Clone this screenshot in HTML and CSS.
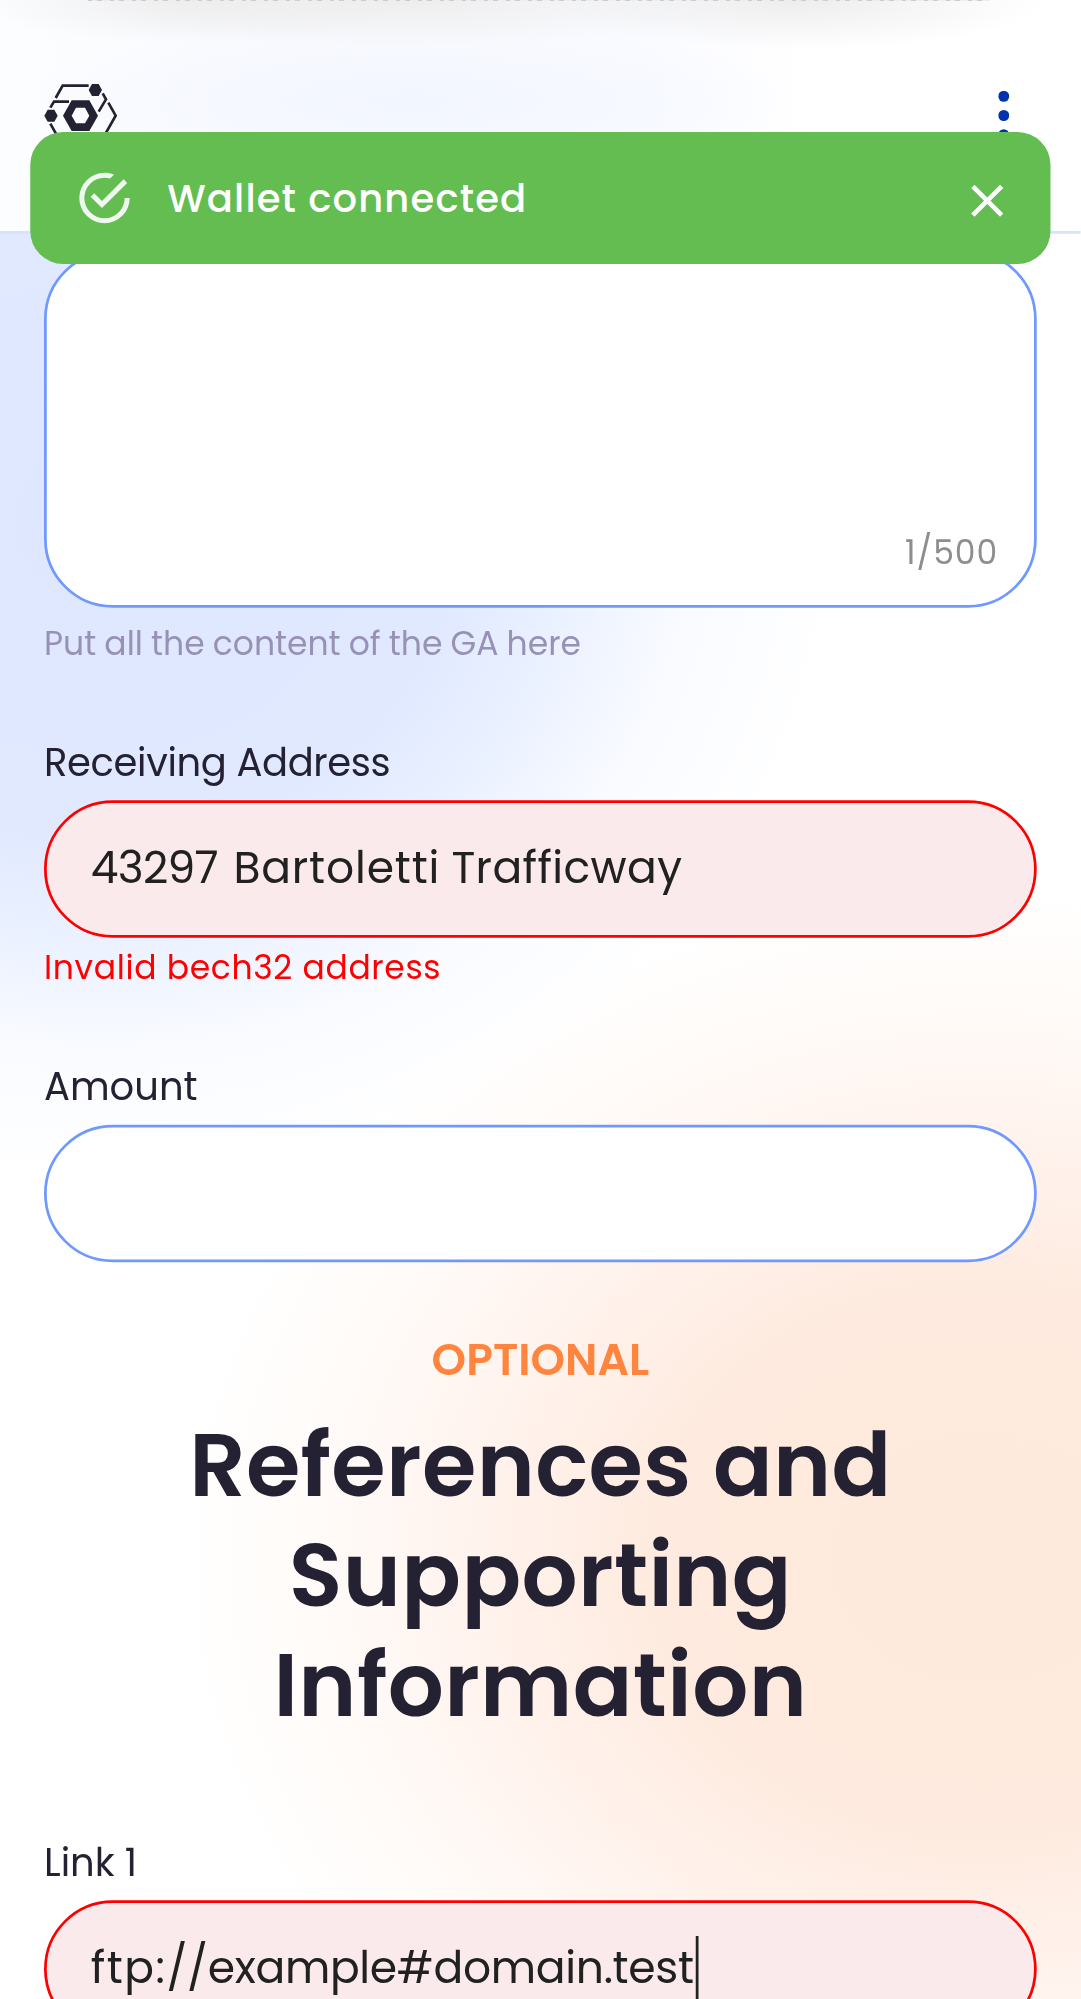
FILE: index.html
```html
<!DOCTYPE html>
<html lang="en">
<head>
<meta charset="utf-8">
<title>Governance action</title>
<link rel="stylesheet" href="styles.css">
</head>
<body>
<div class="page">
  <header class="topbar">
    <svg class="logo" viewBox="132 247.5 222.75 198" fill="#242232" stroke="none">
      <g fill="none" stroke="#242232" stroke-width="8">
        <path d="M266 257H188L167 294"/>
        <path d="M207 305H162L151 323"/>
        <path d="M308 280L318 298L296 335"/>
        <path d="M325 308L347 347L296 437H188L151 371"/>
      </g>
      <path d="M276 252H296L306 270L296 288H276L266 270Z"/>
      <path d="M143 329H163L173 347L163 365H143L133 347Z"/>
      <path fill-rule="evenodd" d="M215 301H268L294 347L268 393H215L189 347ZM228 323L215 347L228 370H255L268 347L255 323Z"/>
    </svg>
    <svg class="menu-dots" viewBox="0 0 4 18" fill="#0033AD">
      <circle cx="2" cy="2" r="2"/><circle cx="2" cy="9" r="2"/><circle cx="2" cy="16" r="2"/>
    </svg>
  </header>

  <div class="toast" role="alert">
    <svg class="toast-icon" viewBox="0 0 24 24" fill="#fff"><path d="M20,12A8,8 0 0,1 12,20A8,8 0 0,1 4,12A8,8 0 0,1 12,4C12.76,4 13.5,4.11 14.2,4.31L15.77,2.74C14.61,2.26 13.34,2 12,2A10,10 0 0,0 2,12A10,10 0 0,0 12,22A10,10 0 0,0 22,12M7.91,10.08L6.5,11.5L11,16L21,6L19.59,4.58L11,13.17L7.91,10.08Z"/></svg>
    <span class="toast-text">Wallet connected</span>
    <svg class="toast-close" viewBox="0 0 24 24" fill="#fff"><path d="M19 6.41L17.59 5 12 10.59 6.41 5 5 6.41 10.59 12 5 17.59 6.41 19 12 13.41 17.59 19 19 17.59 13.41 12z"/></svg>
  </div>

  <main class="form">
    <div class="field">
      <div class="control control-area"><span class="counter">1/500</span></div>
      <p class="helper">Put all the content of the GA here</p>
    </div>
    <div class="field">
      <span class="label label-address">Receiving Address</span>
      <div class="control invalid"><span class="house">43297 </span><span class="street">Bartoletti </span><span class="street-type">Trafficway</span></div>
      <p class="helper error">Invalid bech32 address</p>
    </div>
    <div class="field">
      <span class="label">Amount</span>
      <div class="control"></div>
    </div>
    <section class="section-title">
      <p class="optional">OPTIONAL</p>
      <h2 class="title">References and Supporting Information</h2>
    </section>
    <div class="field">
      <span class="label">Link 1</span>
      <div class="control invalid"><span class="scheme">ftp:</span><span class="rest">//example#domain.test</span><i class="caret"></i></div>
    </div>
  </main>
</div>
</body>
</html>
```
FILE: styles.css
```css
* { box-sizing: border-box; }

body {
  margin: 0;
  height: 1999px;
  overflow: hidden;
  background:
    radial-gradient(ellipse 740px 660px at 100px 520px, #dfe7ff 0%, #e1e9ff 48%, #e9f0ff 62%, rgba(248, 250, 255, .85) 80%, rgba(255, 255, 255, 0) 100%),
    radial-gradient(ellipse 800px 670px at 980px 1560px, #feeadd 0%, #feeade 38%, #fff1ea 58%, #fffaf7 80%, rgba(255, 255, 255, 0) 100%),
    #fff;
  font-family: Poppins, Inter, sans-serif;
  color: #242232;
}

/* Phone-sized layout (393px wide) enlarged to the device scale */
.page {
  position: relative;
  width: 393px;
  height: 727px;
  overflow: hidden;
  transform: scale(2.75);
  transform-origin: 0 0;
}

.topbar {
  display: flex;
  justify-content: space-between;
  align-items: flex-start;
  height: 85px;
  padding: 30px 26px 0 16px;
  border-bottom: 1px solid #d6e2ff;
  background:
    repeating-linear-gradient(90deg, #cbcbcb 0 1.6px, #ededed 1.6px 3.4px, #cbcbcb 3.4px 5px, #ededed 5px 8px) 32px 0 / 328px .36px no-repeat,
    radial-gradient(ellipse 80px 16px at 70px 0, rgba(235, 235, 235, .8), rgba(245, 245, 245, 0)),
    radial-gradient(ellipse 120px 17px at 150px 0, rgba(236, 236, 236, .9), rgba(245, 245, 245, 0)),
    radial-gradient(ellipse 90px 18px at 290px 0, rgba(235, 235, 235, .9), rgba(245, 245, 245, 0)),
    radial-gradient(ellipse 140px 30px at 150px 37px, #f2f6ff 0%, #f5f8ff 45%, rgba(250, 251, 255, 0) 100%),
    linear-gradient(90deg, #fcfdff, #f9fafe 30%, #fafbff 60%, #fff 75%);
}

.logo { width: 27px; height: 24px; }

.menu-dots {
  width: 4px;
  height: 18px;
  margin-top: 3px;
}

/* Snackbar floating over the header and the form */
.toast {
  position: absolute;
  top: 48px;
  left: 11px;
  display: flex;
  align-items: flex-start;
  width: 371px;
  height: 48px;
  padding: 13px 13px 0 16px;
  border-radius: 12px;
  background: #63bd51;
  color: #fff;
}

.toast-icon { width: 22px; height: 22px; opacity: .9; }

.toast-text {
  flex: 1;
  margin: 1px 0 0 11.8px;
  font-size: 14px;
  line-height: 20px;
  font-weight: 500;
  letter-spacing: .42px;
}

.toast-close { width: 20px; height: 20px; margin-top: 2px; }

.form { padding: 6px 16px 0; }

.control {
  height: 50px;
  padding: 0 16px;
  border: 1px solid #6f99ff;
  border-radius: 25px;
  background: #fff;
  color: #212121;
  font-size: 16px;
  line-height: 47px;
  white-space: nowrap;
}

.invalid { border-color: #f00; background: #faeaeb; }

.house { margin-right: 1.6px; letter-spacing: -.25px; }
.street { margin-right: -.5px; letter-spacing: .31px; }
.street-type { letter-spacing: .14px; }
.scheme { letter-spacing: .55px; }
.rest { letter-spacing: -.11px; }

.control-area {
  display: flex;
  justify-content: flex-end;
  align-items: flex-end;
  height: 130px;
  padding: 0 13px 11px;
}

.counter {
  color: #8e8e8e;
  font-size: 12px;
  line-height: 16px;
  letter-spacing: .35px;
}

.helper {
  margin: 5px 0 0;
  color: #9792b5;
  font-size: 12px;
  line-height: 16px;
  word-spacing: -.25px;
}

.error {
  margin: 3px 0 25px;
  color: #f00;
  letter-spacing: .24px;
  word-spacing: 0;
}

.field + .field { margin-top: 25px; }

.label {
  display: block;
  margin-bottom: 4px;
  font-size: 14px;
  line-height: 20px;
}

.label-address { letter-spacing: -.13px; }

.section-title {
  margin: 24px 0 34px;
  text-align: center;
}

.optional {
  margin: 0 0 6px;
  color: #ff843d;
  font-size: 16px;
  line-height: 24px;
  font-weight: 600;
}

.title {
  margin: 0 40px;
  font-size: 32px;
  line-height: 40px;
  font-weight: 600;
  letter-spacing: .14px;
}

.caret {
  display: inline-block;
  width: .8px;
  height: 24px;
  margin-left: 1px;
  vertical-align: -7px;
  background: #212121;
}
```
